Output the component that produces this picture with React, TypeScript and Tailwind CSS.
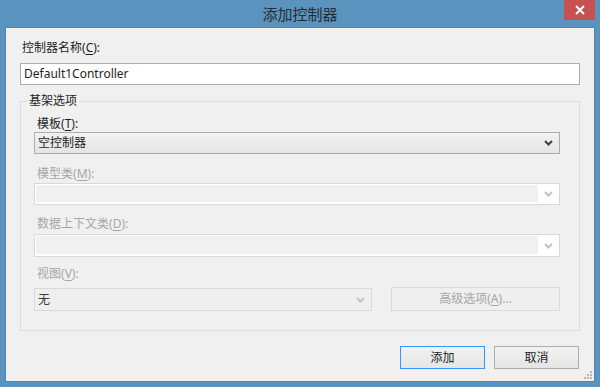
import React from 'react';

const font = "font-['Noto_Sans','Noto_Sans_CJK_SC',sans-serif]";

function Chevron({ color }: { color: string }) {
  return (
    <svg width="9" height="6" viewBox="0 0 9 6" className="block">
      <polyline points="1,1 4.5,4.5 8,1" fill="none" stroke={color} strokeWidth="2" />
    </svg>
  );
}

function Key({ k }: { k: string }) {
  return (
    <>
      (<u className="underline underline-offset-2">{k}</u>)
    </>
  );
}

function App() {
  return (
    <div className={`w-[600px] h-[387px] bg-[#5a93bd] flex flex-col ${font} text-[12px] text-[#1e1e1e]`}>
      {/* Title bar */}
      <div className="relative h-[27px] shrink-0 flex items-center justify-center">
        <span className="text-[15px] leading-[20px] text-[#2b2b2b] font-['Noto_Sans_CJK_SC',sans-serif] mt-[1px]">添加控制器</span>
        <div className="absolute right-[5px] top-0 w-[31px] h-[20px] bg-[#c75050] flex items-center justify-center">
          <svg width="10" height="10" viewBox="0 0 10 10">
            <path d="M1 1 L9 9 M9 1 L1 9" stroke="#fff" strokeWidth="2" />
          </svg>
        </div>
      </div>

      {/* Body */}
      <div className="relative mx-[5px] h-[355px] bg-[#f0f0f0] border border-[#4f85ae] px-[14px] pt-[12px] flex flex-col">
        <div className="h-[16px] leading-[16px] pl-[2px]">
          控制器名称<Key k="C" />:
        </div>
        <div className="mt-[7px] h-[22px] bg-white border border-[#abadb3] pl-[3px] leading-[20px]">
          Default1Controller
        </div>

        <fieldset className="mt-[8px] h-[238px] border border-[#dcdcdc] pl-[13px] pr-[19px] flex flex-col">
          <legend className="-ml-[7px] px-[2px] h-[16px] leading-[16px]">基架选项</legend>

          <div className="mt-[7px] h-[16px] leading-[16px] pl-[3px]">
            模板<Key k="T" />:
          </div>
          <div className="h-[22px] border border-[#acacac] bg-gradient-to-b from-[#f2f2f2] to-[#e5e5e5] flex items-center justify-between pl-[3px] pr-[6px]">
            <span className="leading-[20px]">空控制器</span>
            <Chevron color="#404040" />
          </div>

          <div className="mt-[12px] h-[16px] leading-[16px] pl-[3px] text-[#a6a6a6]">
            模型类<Key k="M" />:
          </div>
          <div className="mt-[1px] h-[22px] border border-[#d9d9d9] bg-white p-[1px] flex">
            <div className="flex-1 bg-[#f0f0f0] mb-[1px]" />
            <div className="w-[20px] flex items-center justify-center">
              <Chevron color="#c2c2c2" />
            </div>
          </div>

          <div className="mt-[11px] h-[16px] leading-[16px] pl-[3px] text-[#a6a6a6]">
            数据上下文类<Key k="D" />:
          </div>
          <div className="mt-[2px] h-[23px] border border-[#d9d9d9] bg-white p-[1px] flex">
            <div className="flex-1 bg-[#f0f0f0] mb-[1px]" />
            <div className="w-[20px] flex items-center justify-center">
              <Chevron color="#c2c2c2" />
            </div>
          </div>

          <div className="mt-[9px] h-[16px] leading-[16px] pl-[3px] text-[#a6a6a6]">
            视图<Key k="V" />:
          </div>
          <div className="mt-[5px] flex items-end justify-between">
            <div className="w-[338px] h-[23px] border border-[#d9d9d9] bg-[#efefef] flex items-center justify-between pl-[3px] pr-[6px]">
              <span className="leading-[20px] text-[#3c3c3c]">无</span>
              <Chevron color="#c2c2c2" />
            </div>
            <div className="w-[169px] h-[24px] border border-[#d9d9d9] bg-[#efefef] flex items-center justify-center text-[#a6a6a6]">
              高级选项<Key k="A" />...
            </div>
          </div>
        </fieldset>

        <div className="mt-[15px] flex justify-end gap-[9px] pr-[1px]">
          <div className="w-[85px] h-[23px] border border-[#3399ff] bg-gradient-to-b from-[#f2f2f2] to-[#e5e5e5] flex items-center justify-center">
            添加
          </div>
          <div className="w-[85px] h-[23px] border border-[#acacac] bg-gradient-to-b from-[#f2f2f2] to-[#e5e5e5] flex items-center justify-center">
            取消
          </div>
        </div>

        {/* resize grip */}
        <svg className="absolute right-[1px] bottom-[1px]" width="10" height="10" viewBox="0 0 10 10">
          <rect x="7" y="1" width="2" height="2" fill="#b8b8b8" />
          <rect x="4" y="4" width="2" height="2" fill="#b8b8b8" />
          <rect x="7" y="4" width="2" height="2" fill="#b8b8b8" />
          <rect x="1" y="7" width="2" height="2" fill="#b8b8b8" />
          <rect x="4" y="7" width="2" height="2" fill="#b8b8b8" />
          <rect x="7" y="7" width="2" height="2" fill="#b8b8b8" />
        </svg>
      </div>
    </div>
  );
}

export default App;
